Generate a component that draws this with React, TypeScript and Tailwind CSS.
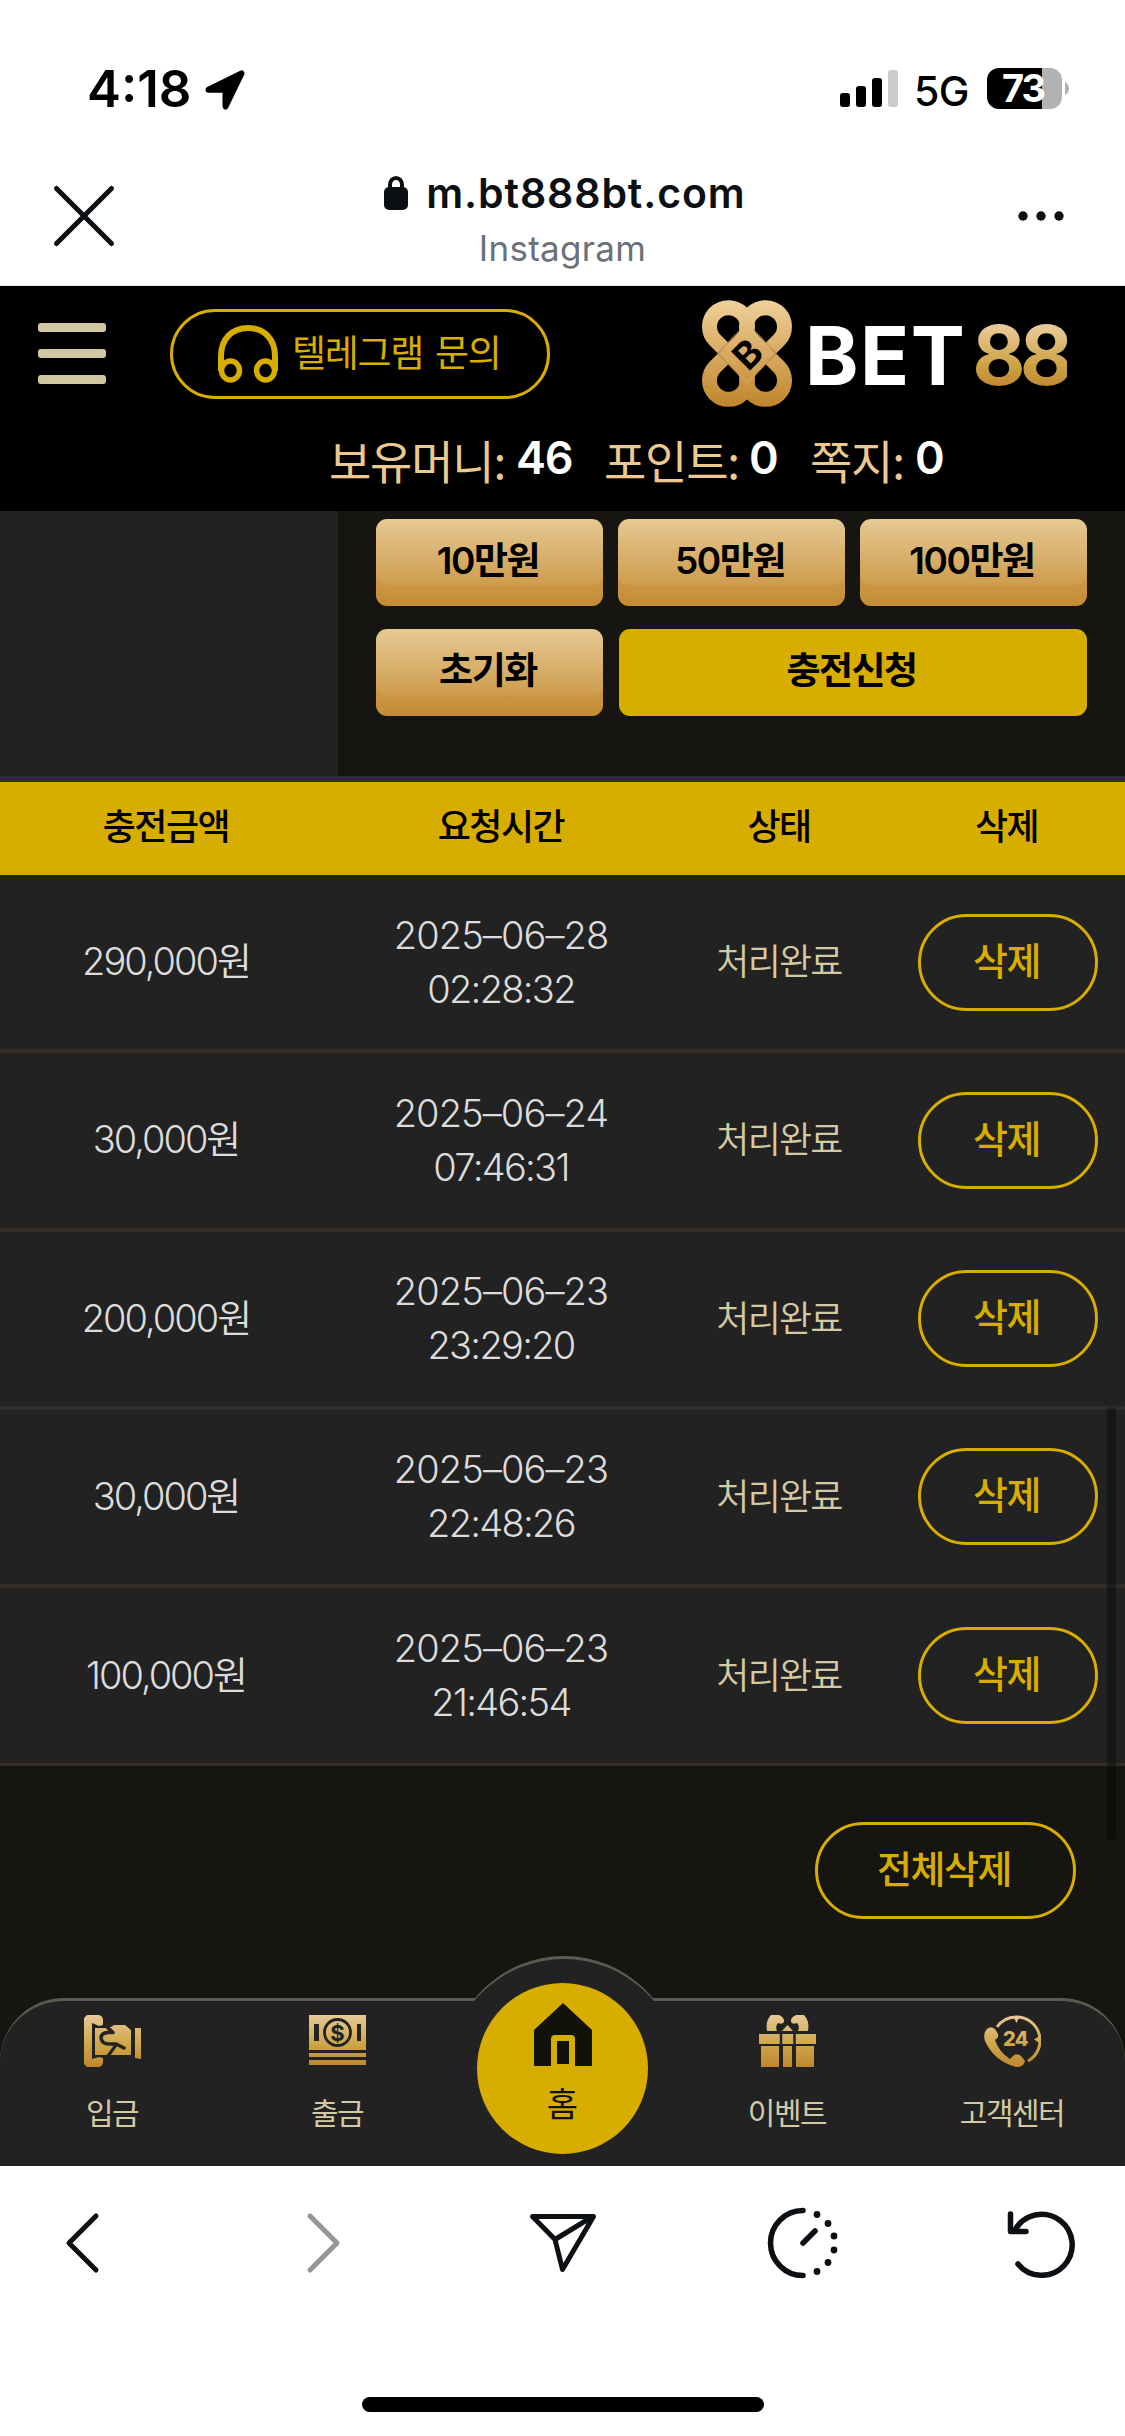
import React from "react";

const latin = "font-['Inter','Noto_Sans_CJK_KR',sans-serif]";
const korean = "font-['Noto_Sans_CJK_KR',sans-serif]";

const rows = [
  { amount: "290,000원", date: "2025–06–28", time: "02:28:32" },
  { amount: "30,000원", date: "2025–06–24", time: "07:46:31" },
  { amount: "200,000원", date: "2025–06–23", time: "23:29:20" },
  { amount: "30,000원", date: "2025–06–23", time: "22:48:26" },
  { amount: "100,000원", date: "2025–06–23", time: "21:46:54" },
];

function Gold({ id, h }: { id: string; h: number }) {
  return (
    <defs>
      <linearGradient id={id} gradientUnits="userSpaceOnUse" x1="0" y1="0" x2="0" y2={h}>
        <stop offset="0" stopColor="#e8c896" />
        <stop offset="0.6" stopColor="#cda445" />
        <stop offset="1" stopColor="#bf8730" />
      </linearGradient>
    </defs>
  );
}

function StatusBar() {
  return (
    <div className="flex h-[145px] items-start justify-between pl-[87px] pr-[56px] pt-[68px]">
      <div className="flex items-start">
        <span className="text-[51px] font-semibold leading-[42px] tracking-[0px] text-black">4:18</span>
        <svg className="ml-[14px] mt-[2px]" width="40" height="40" viewBox="0 0 40 40">
          <path d="M36.5 3.5 20.5 36.5V19.7H3.5Z" fill="#000" stroke="#000" strokeWidth="6" strokeLinejoin="round" />
        </svg>
      </div>
      <div className="flex items-start">
        <svg className="mt-[2px]" width="58" height="37" viewBox="0 0 58 37">
          <rect x="0" y="23" width="10" height="14" rx="3" />
          <rect x="16" y="16" width="10" height="21" rx="3" />
          <rect x="32" y="8" width="10" height="29" rx="3" />
          <rect x="48" y="0" width="10" height="37" rx="3" fill="#ccc" />
        </svg>
        <span className="ml-[16px] w-[57px] whitespace-nowrap text-[41px] font-medium leading-[46px] tracking-[-0.5px] text-black">5G</span>
        <div className="ml-[16px] flex h-[41px] w-[75px] justify-center rounded-[12px] bg-[linear-gradient(90deg,#000_73%,#b2b2b2_73%)] pr-[3px]">
          <span className="text-[38px] font-bold leading-[41px] tracking-[-2px] text-white">73</span>
        </div>
        <svg className="ml-[3px] mt-[14px]" width="4" height="13" viewBox="0 0 4 13">
          <path d="M0 0Q4 2 4 6.500T0 13Z" fill="#b2b2b2" />
        </svg>
      </div>
    </div>
  );
}

function AddressBar() {
  return (
    <div className="flex h-[141px] items-start justify-between border-b border-[#e3e9ea] pl-[52px] pr-[60px]">
      <svg className="mt-[39px]" width="64" height="64" viewBox="0 0 64 64">
        <path d="M4.500 4.500 59.500 59.500M59.500 4.500 4.500 59.500" stroke="#0c1014" strokeWidth="5" strokeLinecap="round" />
      </svg>
      <div className="flex w-[420px] flex-col items-center pr-[3px]">
        <div className="mt-[24px] flex items-start">
          <svg className="mt-[7px]" width="24" height="34" viewBox="0 0 24 34">
            <path d="M6 14V8.500a6 6.500 0 0 1 12 0V14" fill="none" stroke="#0c1014" strokeWidth="4" />
            <rect y="11" width="24" height="23" rx="5" fill="#0c1014" />
          </svg>
          <span className="ml-[18px] whitespace-nowrap text-[41px] font-semibold leading-[48px] tracking-[0.9px] text-[#0c1014]">m.bt888bt.com</span>
        </div>
        <div className="mr-[5px] mt-[11px] text-[35px] leading-[40px] tracking-[0.3px] text-[#6a717b]">Instagram</div>
      </div>
      <svg className="mt-[66px]" width="48" height="10" viewBox="0 0 48 10">
        <circle cx="6" cy="5" r="4.700" fill="#0c1014" />
        <circle cx="24" cy="5" r="4.700" fill="#0c1014" />
        <circle cx="42" cy="5" r="4.700" fill="#0c1014" />
      </svg>
    </div>
  );
}

function Emblem() {
  const eight = (x: number) =>
    `M${x} 53.500 L${x - 13.500} 40 A19 19 0 1 1 ${x + 13.500} 40 L${x - 13.500} 67 A19 19 0 1 0 ${x + 13.500} 67 Z`;
  return (
    <svg width="90" height="107" viewBox="0 0 90 107">
      <defs>
        <linearGradient id="emblem" gradientUnits="userSpaceOnUse" x1="0" y1="0" x2="0" y2="107">
          <stop offset="0" stopColor="#efd19a" />
          <stop offset="0.5" stopColor="#d9aa62" />
          <stop offset="1" stopColor="#c0852c" />
        </linearGradient>
        <linearGradient id="shade" x1="0" x2="1">
          <stop offset="0" stopColor="#8f672d" />
          <stop offset="0.3" stopColor="#dcae66" />
          <stop offset="0.7" stopColor="#dcae66" />
          <stop offset="1" stopColor="#8f672d" />
        </linearGradient>
      </defs>
      <g fill="none" stroke="url(#emblem)" strokeWidth="15">
        <path d={eight(26.5)} />
        <path d={eight(63.5)} />
      </g>
      <path d="M45 24 74 53.500 45 83 16 53.500Z" fill="url(#emblem)" />
      <path d="M30 38 45 24 60 38 74 53.500 60 68 45 83 30 68 16 53.500Z" fill="none" stroke="url(#shade)" strokeWidth="1.500" opacity="0.5" />
      <text x="0" y="0" transform="translate(55 63.500) rotate(-45)" textAnchor="middle" fontFamily="Inter" fontWeight="700" fontSize="37" fill="#060400">B</text>
    </svg>
  );
}

function SiteHeader() {
  return (
    <header className="h-[225px] bg-black">
      <div className="flex h-[136px] items-start">
        <div className="ml-[38px] mt-[37px] flex w-[68px] flex-col gap-[17px]">
          <div className="h-[9px] rounded-[3px] bg-[#d0c7a3]" />
          <div className="h-[9px] rounded-[3px] bg-[#d0c7a3]" />
          <div className="h-[9px] rounded-[3px] bg-[#d0c7a3]" />
        </div>
        <button className="ml-[64px] mt-[23px] flex h-[90px] w-[380px] items-center rounded-full border-[3px] border-[#d7ad00] pl-[45px]">
          <svg width="60" height="58" viewBox="0 0 60 58">
            <path d="M3 46V31C3 14 14 3 30 3s27 11 27 28v15" fill="none" stroke="#d7ad00" strokeWidth="6" />
            <ellipse cx="12.500" cy="45.500" rx="9" ry="9.500" fill="none" stroke="#d7ad00" strokeWidth="5.500" />
            <ellipse cx="47.500" cy="45.500" rx="9" ry="9.500" fill="none" stroke="#d7ad00" strokeWidth="5.500" />
          </svg>
          <span className={`${korean} mb-[6px] ml-[14px] whitespace-nowrap text-[37px] leading-[50px] tracking-[-1.300px] text-[#d7ad00] [word-spacing:5px]`}>텔레그램 문의</span>
        </button>
        <div className="ml-[152px] mt-[14px] flex items-start">
          <Emblem />
          <span className="ml-[13px] mt-[7px] text-[81px] font-bold leading-[98px] tracking-[1.500px] text-white">BET</span>
          <span className="ml-[6px] mt-[7px] bg-[linear-gradient(180deg,#e8c896_22%,#cda445_58%,#bf8730_82%)] bg-clip-text text-[82px] font-bold leading-[98px] tracking-[-6px] text-transparent">88</span>
        </div>
      </div>
      <div className={`${korean} flex items-start pl-[329px] text-[46px] leading-[60px] tracking-[-1.200px] text-[#ebc990]`}>
        <span className="mt-[7px] w-[187px] whitespace-nowrap">보유머니:</span>
        <span className="mt-[6px] w-[88px] font-['Inter'] text-[45px] font-semibold text-white">46</span>
        <span className="mt-[7px] w-[145px] whitespace-nowrap">포인트:</span>
        <span className="mt-[6px] w-[61px] font-['Inter'] text-[45px] font-semibold text-white">0</span>
        <span className="mt-[7px] w-[105px] whitespace-nowrap">쪽지:</span>
        <span className="mt-[6px] font-['Inter'] text-[45px] font-semibold text-white">0</span>
      </div>
    </header>
  );
}

function GoldButton({ children }: { children: React.ReactNode }) {
  return (
    <button className={`${latin} h-[87px] w-[227px] rounded-[11px] bg-[linear-gradient(180deg,#e6c993,#c68e38)] pb-[4px] pr-[3px] text-[37px] font-semibold tracking-[-1.400px] text-black shadow-[inset_0_-21px_0_rgba(190,130,40,0.25)]`}>
      {children}
    </button>
  );
}

function ChargePanel() {
  return (
    <section className="flex h-[271px] border-b-[6px] border-[#332d2a]">
      <div className="w-[338px] bg-[#222]" />
      <div className="flex flex-1 flex-col gap-[23px] bg-[#161512] pl-[38px] pt-[8px]">
        <div className="flex gap-[15px]">
          <GoldButton>10만원</GoldButton>
          <GoldButton>50만원</GoldButton>
          <GoldButton>100만원</GoldButton>
        </div>
        <div className="flex gap-[16px]">
          <GoldButton>초기화</GoldButton>
          <button className={`${latin} h-[87px] w-[468px] rounded-[11px] bg-[#d7ad00] pb-[4px] pr-[3px] text-[37px] font-semibold tracking-[-1.500px] text-black`}>충전신청</button>
        </div>
      </div>
    </section>
  );
}

function History() {
  return (
    <section className={latin}>
      <div className={`${korean} grid h-[93px] grid-cols-[332px_338px_218px_237px] items-center bg-[#d7ad00] pb-[9px] text-center text-[36px] font-medium tracking-[-1.5px] text-black`}>
        <span>충전금액</span>
        <span>요청시간</span>
        <span>상태</span>
        <span>삭제</span>
      </div>
      {rows.map((r, i) => (
        <div
          key={i}
          className="grid h-[178.250px] grid-cols-[332px_338px_218px_237px] items-center border-b-[4px] border-[#332d2a] bg-[#222] text-center last:border-b-[3px]"
        >
          <span className="-mt-[1px] text-[38px] font-[350] tracking-[-2px] text-[#dcdcdc]">{r.amount}</span>
          <span className="-mt-[1px] flex flex-col text-[38px] font-[350] leading-[54px] text-[#dcdcdc]">
            <span className="tracking-[-0.900px]">{r.date}</span>
            <span className="tracking-[-1.700px]">{r.time}</span>
          </span>
          <span className={`${korean} -mt-[6px] text-[36px] font-[350] tracking-[-1.800px] text-[#d3caa5]`}>처리완료</span>
          <button className={`${korean} ml-[30px] h-[97px] w-[180px] rounded-full border-[3px] border-[#d7ad00] pb-[8px] pr-[3px] text-[38px] font-medium tracking-[-1.5px] text-[#d7ad00]`}>삭제</button>
        </div>
      ))}
    </section>
  );
}

function NavItem({ label, children }: { label: string; children: React.ReactNode }) {
  return (
    <div className="flex w-[225px] flex-col items-center pt-[14px]">
      {children}
      <span className={`${korean} mr-px mt-[24px] whitespace-nowrap text-[30px] leading-[40px] tracking-[-1.5px] text-[#d3caa5]`}>{label}</span>
    </div>
  );
}

function BottomNav() {
  return (
    <nav className="relative h-[168px] w-full">
      <div className="flex h-[168px] w-full overflow-hidden rounded-t-[64px] border-t-[3px] border-[#5d5b51] bg-[#222]">
        <NavItem label="입금">
          <svg width="57" height="52" viewBox="0 0 57 52">
            <Gold id="g1" h={52} />
            <g fill="url(#g1)">
              <path d="M3 0H15Q19 1 19 5V10L15 11 8 8V44L15 42 19 43V47Q19 51 15 52H3L0 49V3Z" />
              <path d="M11 13H22L27 12 30 10H41L47 15V40H11Z" />
              <path d="M51 13H57V44L51 43Z" />
            </g>
            <g fill="none" stroke="#25231f" strokeLinecap="round" strokeLinejoin="round">
              <path d="M23 12 29 17.500H24Q17 18 17 23 18 29 25 29H32L40 33" strokeWidth="3.500" />
              <path d="M32 30 24 41" strokeWidth="3" />
            </g>
          </svg>
        </NavItem>
        <NavItem label="출금">
          <svg width="57" height="52" viewBox="0 0 57 52">
            <Gold id="g2" h={50} />
            <path d="M0 0h57v35H0zM0 38h57v4H0zM0 45h57v5H0z" fill="url(#g2)" />
            <circle cx="28.500" cy="17.500" r="13" fill="none" stroke="#222" strokeWidth="2.800" />
            <path d="M5 9h5v17H5zM48 9h4v17h-4z" fill="#222" />
            <text x="28.500" y="25.500" textAnchor="middle" fontFamily="Inter" fontWeight="700" fontSize="22" fill="#222">$</text>
          </svg>
        </NavItem>
        <div className="w-[225px]" />
        <NavItem label="이벤트">
          <svg width="57" height="52" viewBox="0 0 57 52">
            <Gold id="g3" h={52} />
            <g fill="url(#g3)">
              <path d="M0 19h57v10H0zM2 31h18v21H2zM24 31h9v21h-9zM37 31h18v21H37z" />
              <path d="M8 16Q6 6 12 0h8q6 3 5 7-2 3-6 1-3 3-1 8ZM49 16Q51 6 45 0h-8q-6 3-5 7 2 3 6 1 3 3 1 8ZM23 16l5.500-6 5.500 6Z" />
            </g>
            <path d="M22 17v35M35.500 17v35" stroke="#222" strokeWidth="2.500" />
          </svg>
        </NavItem>
        <NavItem label="고객센터">
          <svg width="57" height="52" viewBox="0 0 57 52">
            <Gold id="g4" h={52} />
            <path d="M13 12A23.500 23.500 0 0 1 32 2 23.500 23.500 0 0 1 44 46" fill="none" stroke="url(#g4)" strokeWidth="3" />
            <path d="M29 1h7l-3.500 7ZM57 20v9l-7-4.500Z" fill="url(#g4)" />
            <path d="M2 15q4-5 9-1l3 5q1 4-3 6 4 12 15 19l4-4q5-2 8 2l3 4q-1 6-9 6Q10 46 1 26q-2-6 1-11Z" fill="url(#g4)" />
            <text x="31.500" y="31" textAnchor="middle" fontFamily="Inter" fontWeight="800" fontSize="20" letterSpacing="-0.5" fill="url(#g4)">24</text>
          </svg>
        </NavItem>
      </div>
      <div className="absolute left-[448px] top-[-42px] h-[45px] w-[232px] overflow-hidden">
        <div className="mx-auto h-[230px] w-[230px] rounded-full border-t-[3px] border-[#5d5b51] bg-[#222]" />
      </div>
      <div className="absolute left-[477px] top-[-15px] flex h-[171px] w-[171px] flex-col items-center rounded-full bg-[#d7ad00] pt-[20px]">
        <svg width="58" height="64" viewBox="0 0 58 64">
          <path d="M29 0 58 27V63H41V36Q41 32 37 32H21Q17 32 17 36V63H0V27Z" fill="#12110a" />
          <path d="M23 38H35V61H23Z" fill="#12110a" />
        </svg>
        <span className={`${korean} mt-[16px] text-[34px] leading-[40px] text-[#12110a]`}>홈</span>
      </div>
    </nav>
  );
}

function BrowserToolbar() {
  return (
    <footer className="flex h-[270px] flex-col items-center justify-between bg-white pb-[24px] pt-[39px]">
      <div className="flex h-[76px] w-full items-center justify-between pl-[63px] pr-[49px]">
        <svg width="40" height="64" viewBox="0 0 40 64">
          <path d="M33 5 6 32 33 59" fill="none" stroke="#0c1014" strokeWidth="5" strokeLinecap="round" strokeLinejoin="round" />
        </svg>
        <svg className="ml-[33px]" width="40" height="64" viewBox="0 0 40 64">
          <path d="M7 5 34 32 7 59" fill="none" stroke="#959595" strokeWidth="5" strokeLinecap="round" strokeLinejoin="round" />
        </svg>
        <svg className="ml-[17px]" width="70" height="64" viewBox="0 0 70 64">
          <path d="M4.500 5.500H65.500L34.500 58.500 27 28.500ZM27 28.500 63 6.500" fill="none" stroke="#0c1014" strokeWidth="5" strokeLinejoin="round" />
        </svg>
        <svg className="-mr-[2px] ml-[2px]" width="74" height="74" viewBox="0 0 74 74">
          <path d="M36 4.500A32.500 32.500 0 0 0 36 69.500" fill="none" stroke="#0c1014" strokeWidth="5.500" strokeLinecap="round" />
          <path d="M36 37 48 25" stroke="#0c1014" strokeWidth="5.500" strokeLinecap="round" />
          <g fill="#0c1014">
            <circle cx="50" cy="8.500" r="3.400" />
            <circle cx="61" cy="17.500" r="3.400" />
            <circle cx="67" cy="30" r="3.400" />
            <circle cx="67" cy="44" r="3.400" />
            <circle cx="61" cy="56.500" r="3.400" />
            <circle cx="50" cy="65.500" r="3.400" />
          </g>
        </svg>
        <svg width="70" height="70" viewBox="0 0 70 70">
          <path d="M12 56A30.500 30.500 0 1 0 9 22" fill="none" stroke="#0c1014" strokeWidth="5.500" strokeLinecap="round" />
          <path d="M4.500 6V23.500H20" fill="none" stroke="#0c1014" strokeWidth="5.500" strokeLinecap="round" strokeLinejoin="round" />
        </svg>
      </div>
      <div className="h-[15px] w-[402px] rounded-full bg-black" />
    </footer>
  );
}

export default function App() {
  return (
    <div className="relative flex h-[2436px] w-[1125px] flex-col overflow-hidden bg-white font-['Inter','Noto_Sans_CJK_KR',sans-serif]">
      <StatusBar />
      <AddressBar />
      <SiteHeader />
      <main className="flex flex-1 flex-col bg-[#161512]">
        <ChargePanel />
        <History />
        <div className="flex flex-1 justify-end pr-[49px] pt-[56px]">
          <button className={`${korean} h-[97px] w-[261px] rounded-full border-[3px] border-[#d7ad00] pb-[8px] pr-[3px] text-[38px] font-medium tracking-[-1.5px] text-[#d7ad00]`}>전체삭제</button>
        </div>
        <BottomNav />
      </main>
      <BrowserToolbar />
      <div className="absolute left-[1107px] top-[1407px] h-[434px] w-[9px] rounded-full bg-black/35" />
    </div>
  );
}
